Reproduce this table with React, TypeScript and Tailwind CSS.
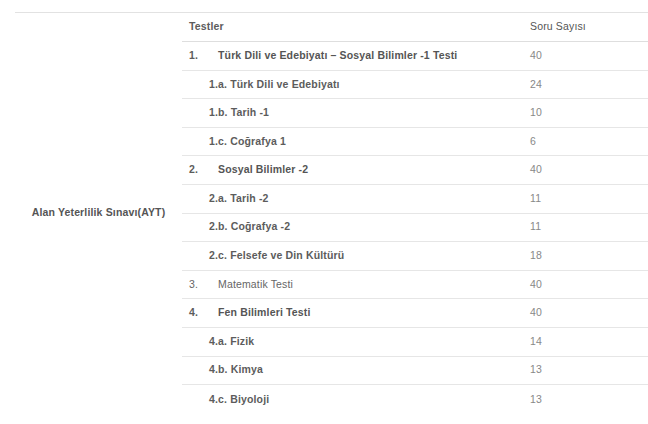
type Row = {
  no?: string;
  title: string;
  count: number;
  kind: "main" | "sub" | "plain";
};

const rows: Row[] = [
  { no: "1.", title: "Türk Dili ve Edebiyatı – Sosyal Bilimler -1 Testi", count: 40, kind: "main" },
  { title: "1.a. Türk Dili ve Edebiyatı", count: 24, kind: "sub" },
  { title: "1.b. Tarih -1", count: 10, kind: "sub" },
  { title: "1.c. Coğrafya 1", count: 6, kind: "sub" },
  { no: "2.", title: "Sosyal Bilimler -2", count: 40, kind: "main" },
  { title: "2.a. Tarih -2", count: 11, kind: "sub" },
  { title: "2.b. Coğrafya -2", count: 11, kind: "sub" },
  { title: "2.c. Felsefe ve Din Kültürü", count: 18, kind: "sub" },
  { no: "3.", title: "Matematik Testi", count: 40, kind: "plain" },
  { no: "4.", title: "Fen Bilimleri Testi", count: 40, kind: "main" },
  { title: "4.a. Fizik", count: 14, kind: "sub" },
  { title: "4.b. Kimya", count: 13, kind: "sub" },
  { title: "4.c. Biyoloji", count: 13, kind: "sub" },
];

export default function App() {
  return (
    <div
      className="min-h-[424px] w-[648px] overflow-hidden bg-white pt-3 pl-[15px] text-[10.5px] tracking-[0.15px] text-[#555]"
      style={{ fontFamily: '"Liberation Sans", Arial, sans-serif' }}
    >
      <div className="flex border-t border-[#e2e2e2]">
        <div className="flex w-[167px] shrink-0 items-center justify-center font-bold text-[#555]">
          Alan Yeterlilik Sınavı(AYT)
        </div>

        <div className="flex-1">
          <div className="flex h-[29px] items-center border-b border-[#dedede]">
            <div className="w-[341px] pl-[7px] font-bold text-[#5c5c5c]">Testler</div>
            <div className="pl-[7px] text-[#555]">Soru Sayısı</div>
          </div>

          {rows.map((r, i) => (
            <div
              key={r.title}
              className={
                i === rows.length - 1
                  ? "flex h-[28.6px] items-center"
                  : "flex h-[28.6px] items-center border-b border-[#e6e6e6]"
              }
            >
              <div className="flex w-[341px] items-center pl-[7px]">
                {r.kind === "sub" ? (
                  <div className="pl-5 font-bold text-[#5c5c5c]">{r.title}</div>
                ) : (
                  <>
                    <div
                      className={
                        r.kind === "plain"
                          ? "w-[29px] text-[#666]"
                          : "w-[29px] font-bold text-[#5c5c5c]"
                      }
                    >
                      {r.no}
                    </div>
                    <div
                      className={
                        r.kind === "plain" ? "text-[#666]" : "font-bold text-[#555]"
                      }
                    >
                      {r.title}
                    </div>
                  </>
                )}
              </div>
              <div className="pl-[7px] text-[#888]">{r.count}</div>
            </div>
          ))}
        </div>
      </div>
    </div>
  );
}
